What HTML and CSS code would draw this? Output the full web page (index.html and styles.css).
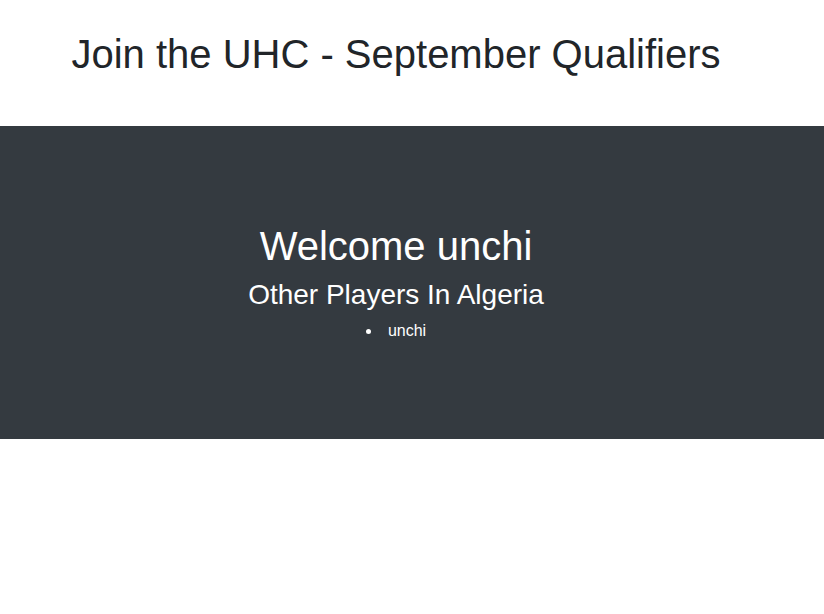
FILE: index.html
```html
<!DOCTYPE html>
<html lang="en">
<head>
<meta charset="utf-8">
<title>UHC - September Qualifiers</title>
<link rel="stylesheet" href="styles.css">
</head>
<body>
<header class="page-header">
  <h1 class="page-title">Join the UHC - September Qualifiers</h1>
</header>
<section class="welcome">
  <h1 class="welcome-title">Welcome unchi</h1>
  <h3 class="welcome-sub">Other Players In Algeria</h3>
  <ul class="players">
    <li>unchi</li>
  </ul>
</section>
</body>
</html>
```

FILE: styles.css
```css
html, body {
  margin: 0;
  padding: 0;
  background: #ffffff;
  font-family: "Liberation Sans", Arial, sans-serif;
  color: #212529;
}

.page-header {
  padding: 30px 32px 48px 0;
  text-align: center;
}

.page-title {
  margin: 0;
  font-size: 40px;
  font-weight: 400;
  line-height: 48px;
}

.welcome {
  background: #343a40;
  color: #ffffff;
  padding: 96px 32px 96px 0;
  text-align: center;
}

.welcome-title {
  margin: 0 0 8px;
  font-size: 40px;
  font-weight: 400;
  line-height: 48px;
}

.welcome-sub {
  margin: 0 0 7px;
  font-size: 28px;
  font-weight: 400;
  line-height: 34px;
}

.players {
  margin: 0;
  padding: 0;
  list-style: disc inside;
  font-size: 16px;
  line-height: 24px;
}
```
